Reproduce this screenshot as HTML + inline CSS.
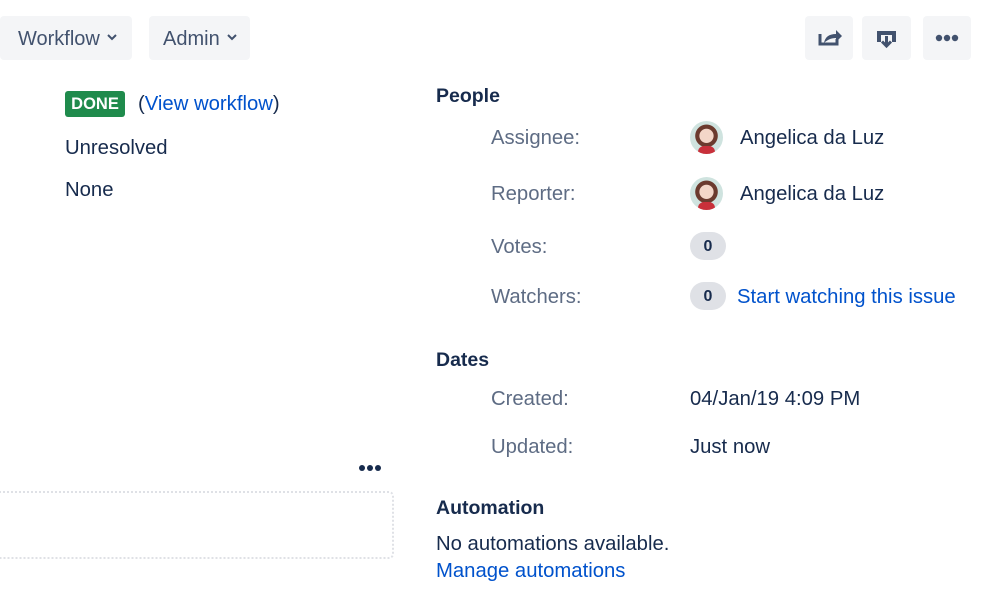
<!DOCTYPE html>
<html><head><meta charset="utf-8"><style>
*{margin:0;padding:0;box-sizing:border-box}
body{width:998px;height:610px;background:#fff;font-family:"Liberation Sans",sans-serif;color:#172b4d;position:relative;overflow:hidden;font-size:20.3px}
.a{position:absolute;white-space:nowrap}
.t{margin-top:1px}
.btn{position:absolute;top:16px;height:44px;background:#f4f5f7;border-radius:4px;color:#42526e;font-size:20px;line-height:46px}
.lbl{color:#5e6c84}
.link{color:#0052cc}
.h{font-weight:bold;font-size:19.5px}
.badge{background:#dfe1e6;border-radius:14px;width:36px;height:28px;text-align:center;line-height:29px;font-weight:bold;font-size:16px}
.av{position:absolute;width:33px;height:33px;border-radius:50%;background:radial-gradient(circle at 50% 45%,#f3d6c8 0 28%,#6b3a2e 30% 45%,#cfe3df 47%);overflow:hidden}
.av:after{content:"";position:absolute;left:8px;bottom:0;width:17px;height:8px;background:#c8303a;border-radius:6px 6px 0 0}
.chev{display:inline-block;vertical-align:middle;margin-left:6px;margin-top:-6px}
</style></head><body>
<div class="btn" style="left:0;width:132px;padding-left:18px">Workflow<svg class="chev" width="12" height="8"><path d="M2 2l4 4 4-4" fill="none" stroke="#42526e" stroke-width="2"/></svg></div>
<div class="btn" style="left:149px;width:101px;padding-left:14px">Admin<svg class="chev" width="12" height="8"><path d="M2 2l4 4 4-4" fill="none" stroke="#42526e" stroke-width="2"/></svg></div>
<div class="btn" style="left:805px;width:48px"><svg width="48" height="44"><path d="M15 18v10h17v-5" fill="none" stroke="#42526e" stroke-width="3"/><path d="M19 27c1-6 5-9 12-9v-4l6 6-6 6v-4c-5 0-9 2-12 5z" fill="#42526e"/></svg></div>
<div class="btn" style="left:862px;width:49px"><svg width="49" height="44"><path d="M15 15h19v11h-4v-7H19v7h-4z" fill="#42526e"/><path d="M24.5 20v10M20 25.5l4.5 4.5 4.5-4.5" fill="none" stroke="#42526e" stroke-width="3"/></svg></div>
<div class="btn" style="left:923px;width:48px"><svg width="48" height="44"><circle cx="16" cy="22" r="3.2" fill="#42526e"/><circle cx="24" cy="22" r="3.2" fill="#42526e"/><circle cx="32" cy="22" r="3.2" fill="#42526e"/></svg></div>

<div class="a" style="left:65px;top:91px;width:60px;height:26px;background:#1f8b4c;border-radius:3px;color:#fff;font-weight:bold;font-size:16.5px;line-height:27px;text-align:center">DONE</div>
<div class="a t" style="left:138px;top:92px">(<span class="link">View workflow</span>)</div>
<div class="a t" style="left:65px;top:136px">Unresolved</div>
<div class="a t" style="left:65px;top:178px">None</div>

<svg class="a" style="left:358px;top:463px" width="26" height="10"><circle cx="4" cy="5" r="3" fill="#172b4d"/><circle cx="12" cy="5" r="3" fill="#172b4d"/><circle cx="20" cy="5" r="3" fill="#172b4d"/></svg>
<div class="a" style="left:-6px;top:491px;width:400px;height:68px;border:2px dotted #dfe1e6;border-radius:5px"></div>

<div class="a h t" style="left:436px;top:84px">People</div>
<div class="a lbl t" style="left:491px;top:126px">Assignee:</div>
<div class="av" style="left:690px;top:121px"></div>
<div class="a t" style="left:740px;top:126px">Angelica da Luz</div>
<div class="a lbl t" style="left:491px;top:182px">Reporter:</div>
<div class="av" style="left:690px;top:177px"></div>
<div class="a t" style="left:740px;top:182px">Angelica da Luz</div>
<div class="a lbl t" style="left:491px;top:235px">Votes:</div>
<div class="a badge" style="left:690px;top:232px">0</div>
<div class="a lbl t" style="left:491px;top:285px">Watchers:</div>
<div class="a badge" style="left:690px;top:282px">0</div>
<div class="a link t" style="left:737px;top:285px">Start watching this issue</div>

<div class="a h t" style="left:436px;top:348px">Dates</div>
<div class="a lbl t" style="left:491px;top:387px">Created:</div>
<div class="a t" style="left:690px;top:387px">04/Jan/19 4:09 PM</div>
<div class="a lbl t" style="left:491px;top:435px">Updated:</div>
<div class="a t" style="left:690px;top:435px">Just now</div>

<div class="a h t" style="left:436px;top:496px">Automation</div>
<div class="a t" style="left:436px;top:532px">No automations available.</div>
<div class="a link t" style="left:436px;top:559px">Manage automations</div>
</body></html>
